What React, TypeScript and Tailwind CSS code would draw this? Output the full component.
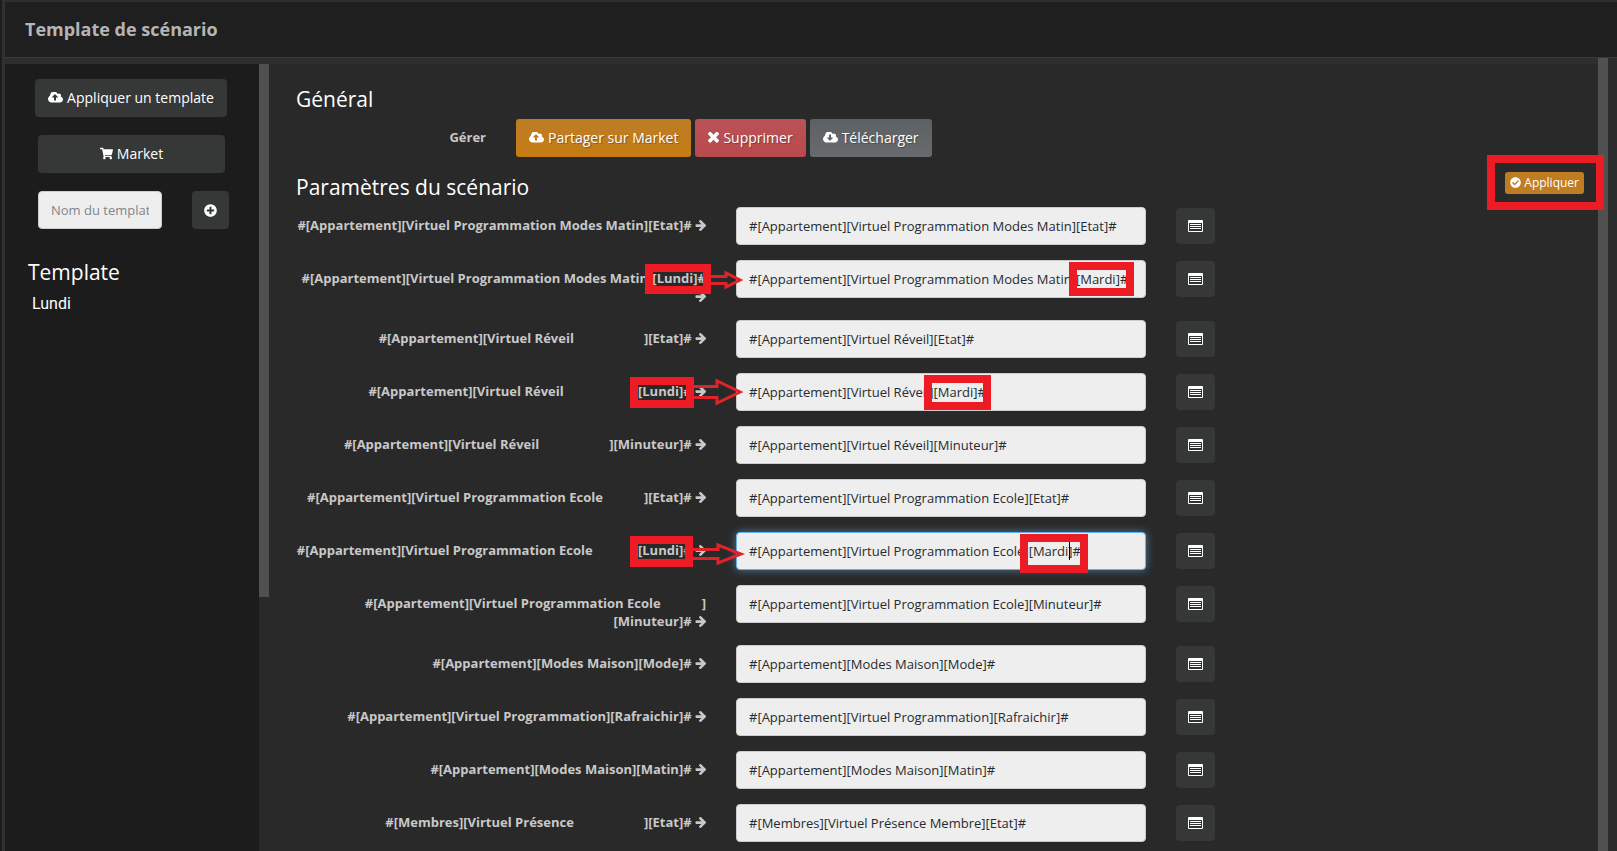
import type { ReactNode } from "react";
import { FaCheckCircle, FaPlusCircle, FaShoppingCart } from "react-icons/fa";

// one line of the scenario parameters form
interface Parametre {
  label: ReactNode;
  valeur: string;
  focus?: boolean;
  // red annotations laid over the row
  cadreLabel?: string;
  cadreValeur?: string;
  fleche?: ReactNode;
}

function FlecheDroite() {
  return (
    <svg
      viewBox="64 192 1536 1536"
      fill="currentColor"
      className="inline-block size-[11px] align-[-1px]"
    >
      <path d="M1600 960q0 54-37 91l-651 651q-39 37-91 37-51 0-90-37l-75-75q-38-38-38-91t38-91l293-293h-704q-52 0-84.5-37.5t-32.5-90.5v-128q0-53 32.5-90.5t84.5-37.5h704l-293-294q-38-36-38-90t38-90l75-75q38-38 90-38 53 0 91 38l651 651q37 35 37 90z" />
    </svg>
  );
}

function IconeNuage({ sens }: { sens: "haut" | "bas" }) {
  const fleche =
    sens === "haut"
      ? "M1216 864q0-14-9-23l-352-352q-9-9-23-9t-23 9l-351 351q-10 12-10 24 0 14 9 23t23 9h224v352q0 13 9.5 22.5t22.5 9.5h192q13 0 22.5-9.5t9.5-22.5v-352h224q13 0 22.5-9.5t9.5-22.5z"
      : "M1216 928q0-14-9-23t-23-9h-224v-352q0-13-9.5-22.5t-22.5-9.5h-192q-13 0-22.5 9.5t-9.5 22.5v352h-224q-13 0-22.5 9.5t-9.5 22.5q0 14 9 23l352 352q9 9 23 9t23-9l351-351q10-12 10-24z";
  return (
    <svg viewBox="-64 256 1920 1280" fill="currentColor" className="h-[11px] w-[15px] shrink-0">
      <path
        fillRule="evenodd"
        d={`${fleche}M1856 1152q0 159-112.5 271.5t-271.5 112.5h-1088q-185 0-316.5-131.5t-131.5-316.5q0-130 70-240t188-165q-2-30-2-43 0-212 150-362t362-150q156 0 285.5 87t188.5 231q71-62 166-62 106 0 181 75t75 181q0 76-41 138 130 31 213.5 135.5t83.5 238.5z`}
      />
    </svg>
  );
}

function IconeCroix() {
  return (
    <svg viewBox="302 434 1188 1120" fill="currentColor" className="size-[11px] shrink-0">
      <path d="M1490 1322q0 40-28 68l-136 136q-28 28-68 28t-68-28l-294-294-294 294q-28 28-68 28t-68-28l-136-136q-28-28-28-68t28-68l294-294-294-294q-28-28-28-68t28-68l136-136q28-28 68-28t68 28l294 294 294-294q28-28 68-28t68 28l136 136q28 28 28 68t-28 68l-294 294 294 294q28 28 28 68z" />
    </svg>
  );
}

function IconeListe() {
  return (
    <svg viewBox="0 0 15 12" className="h-3 w-[15px]">
      <rect width="15" height="12" rx="1" fill="#fff" />
      <path d="M1 3h13v8h-13z" fill="#303232" />
      <path
        d="M2 4.5h11M2 6.5h11M2 8.5h11"
        stroke="#fff"
        strokeWidth="1.2"
      />
    </svg>
  );
}

// blank left where a name has been removed
function Blanc({ court = false }: { court?: boolean }) {
  return <span className={court ? "inline-block w-[41px]" : "inline-block w-[70px]"} />;
}

// hollow red arrow going from the label to the input
function FlecheRouge({ d, className }: { d: string; className: string }) {
  return (
    <svg
      viewBox="0 0 52 28"
      className={`pointer-events-none absolute z-10 h-7 w-[52px] ${className}`}
    >
      <path d={d} fill="none" stroke="#e0222b" strokeWidth="3" />
    </svg>
  );
}

const parametres: Parametre[] = [
  {
    label: "#[Appartement][Virtuel Programmation Modes Matin][Etat]#",
    valeur: "#[Appartement][Virtuel Programmation Modes Matin][Etat]#",
  },
  {
    label: "#[Appartement][Virtuel Programmation Modes Matin][Lundi]#",
    valeur: "#[Appartement][Virtuel Programmation Modes Matin][Mardi]#",
    cadreLabel: "right-[10px] top-1 h-[30px] w-[66px]",
    cadreValeur: "left-[348px] top-[2px] h-[34px] w-[65px]",
    fleche: (
      <FlecheRouge className="top-[6px] -right-[24px]" d="M17 10.5H33V7L47 14L33 21V17.5H17" />
    ),
  },
  {
    label: <>#[Appartement][Virtuel Réveil<Blanc />][Etat]#</>,
    valeur: "#[Appartement][Virtuel Réveil][Etat]#",
  },
  {
    label: <>#[Appartement][Virtuel Réveil<Blanc />][Lundi]#</>,
    valeur: "#[Appartement][Virtuel Réveil][Mardi]#",
    cadreLabel: "right-[27px] top-1 h-[31px] w-[64px]",
    cadreValeur: "left-[203px] top-[2px] h-[35px] w-[67px]",
    fleche: <FlecheRouge className="top-[5px] -right-[24px]" d="M0 8.5H24V3L47 14L24 25V19.5H0" />,
  },
  {
    label: <>#[Appartement][Virtuel Réveil<Blanc />][Minuteur]#</>,
    valeur: "#[Appartement][Virtuel Réveil][Minuteur]#",
  },
  {
    label: <>#[Appartement][Virtuel Programmation Ecole<Blanc court />][Etat]#</>,
    valeur: "#[Appartement][Virtuel Programmation Ecole][Etat]#",
  },
  {
    label: <>#[Appartement][Virtuel Programmation Ecole<Blanc court />][Lundi]#</>,
    valeur: "#[Appartement][Virtuel Programmation Ecole][Mardi]#",
    focus: true,
    cadreLabel: "right-[28px] top-1 h-[31px] w-[63px]",
    cadreValeur: "left-[299px] top-[2px] h-[39px] w-[68px]",
    fleche: <FlecheRouge className="top-[8px] -right-[24px]" d="M0 9.5H25V5L48 14L25 23V18.5H0" />,
  },
  {
    label: (
      <>
        #[Appartement][Virtuel Programmation Ecole
        <Blanc court />]
        <br />
        [Minuteur]#
      </>
    ),
    valeur: "#[Appartement][Virtuel Programmation Ecole][Minuteur]#",
  },
  {
    label: "#[Appartement][Modes Maison][Mode]#",
    valeur: "#[Appartement][Modes Maison][Mode]#",
  },
  {
    label: "#[Appartement][Virtuel Programmation][Rafraichir]#",
    valeur: "#[Appartement][Virtuel Programmation][Rafraichir]#",
  },
  {
    label: "#[Appartement][Modes Maison][Matin]#",
    valeur: "#[Appartement][Modes Maison][Matin]#",
  },
  {
    label: <>#[Membres][Virtuel Présence<Blanc />][Etat]#</>,
    valeur: "#[Membres][Virtuel Présence Membre][Etat]#",
  },
];

function LigneParametre({ parametre, index }: { parametre: Parametre; index: number }) {
  const id = `parametre-${index}`;
  return (
    <div className="mb-[15px] grid grid-cols-3">
      <div className="relative px-[15px] pt-[9px] text-right">
        <label htmlFor={id} className="block text-[13px] leading-[18px] font-bold text-[#c8c8c8]">
          {parametre.label} <FlecheDroite />
        </label>
        {parametre.cadreLabel && (
          <div
            className={`pointer-events-none absolute border-8 border-[#ed1c24] ${parametre.cadreLabel}`}
          />
        )}
        {parametre.fleche}
      </div>
      <div className="relative px-[15px]">
        <input
          id={id}
          type="text"
          defaultValue={parametre.valeur}
          className={`block h-[38px] w-full rounded-[4px] border bg-[#eee] px-3 text-[13px] text-[#272b30] outline-none ${
            parametre.focus
              ? "border-[#66afe9] shadow-[0_0_8px_rgba(102,175,233,0.6)]"
              : "border-[#ccc]"
          }`}
        />
        {parametre.focus && (
          <span className="absolute top-[10px] left-[348px] h-[18px] w-px bg-black" />
        )}
        {parametre.cadreValeur && (
          <div
            className={`pointer-events-none absolute border-8 border-[#ed1c24] ${parametre.cadreValeur}`}
          />
        )}
      </div>
      <div className="px-[15px] pt-px">
        <button
          type="button"
          aria-label="Choisir une commande"
          className="flex h-9 w-[39px] items-center justify-center rounded-[4px] bg-[#363838]"
        >
          <IconeListe />
        </button>
      </div>
    </div>
  );
}

function Sidebar() {
  return (
    <aside className="w-[254px] shrink-0 bg-[#1c1c1c] pt-[15px]">
      <div className="pr-[32px] pl-[30px]">
        <button
          type="button"
          className="flex h-[38px] w-full items-center justify-center gap-1 rounded-[4px] bg-[#363838] pb-[2px] text-[14px] whitespace-nowrap text-white"
        >
          <IconeNuage sens="haut" />
          Appliquer un template
        </button>
      </div>
      <div className="mt-[18px] pr-[34px] pl-[33px]">
        <button
          type="button"
          className="flex h-[38px] w-full items-center justify-center gap-1 rounded-[4px] bg-[#363838] pb-[2px] text-[14px] text-white"
        >
          <FaShoppingCart className="size-[13px]" />
          Market
        </button>
      </div>
      <div className="mt-[18px] flex justify-between pr-[30px] pl-[33px]">
        <input
          type="text"
          aria-label="Nom du template"
          placeholder="Nom du template"
          className="h-[38px] w-[124px] rounded-[4px] border border-[#ccc] bg-[#eee] px-3 text-[13px] outline-none placeholder:text-[#7f8589]"
        />
        <button
          type="button"
          aria-label="Ajouter"
          className="flex h-[38px] w-[37px] items-center justify-center rounded-[4px] bg-[#363838] text-white"
        >
          <FaPlusCircle className="size-[13px]" />
        </button>
      </div>
      <h2 className="mt-[28px] pl-[23px] text-[21px] leading-[30px] text-white">Template</h2>
      <a
        href="#"
        className="mt-[5px] block pl-[27px] font-['Roboto','Liberation_Sans',sans-serif] text-[16px] leading-[24px] text-white"
      >
        Lundi
      </a>
    </aside>
  );
}

export default function App() {
  return (
    <div className="flex h-screen overflow-hidden bg-[#1c1c1c] font-['Open_Sans','Noto_Sans',sans-serif]">
      <div className="w-[5px] shrink-0 border-r-3 border-[#303030] bg-[#1b1d1d]" />
      <div className="flex min-w-0 flex-1 flex-col border-t-2 border-[#2e2e2e]">
        <header className="flex h-[56px] shrink-0 items-center border-b border-[#3a3a3a] bg-[#1f1f1f] pb-[2px] pl-5">
          <h1 className="text-[18px] leading-6 font-bold text-[#b5b5b5]">Template de scénario</h1>
        </header>
        <div className="flex min-h-0 flex-1 bg-[#2e2e2e] pt-[6px]">
          <Sidebar />
          <main className="relative min-w-0 flex-1 bg-[#29292a] pr-4 pl-[22px]">
            {/* scrollbars of the two panels */}
            <div className="absolute top-0 left-0 h-[533px] w-[10px] bg-[#505050]" />
            <div className="absolute -top-[6px] right-0 bottom-0 w-[19px] border-l-10 border-[#505050] bg-[#2c2c2c]" />

            <div className="relative">
              <h2 className="px-[15px] pt-[20px] text-[21px] leading-[30px] text-white">Général</h2>
              <div className="mt-[5px] grid grid-cols-6">
                <span className="px-[15px] pt-[9px] text-right text-[13px] leading-[18px] font-bold text-[#c8c8c8]">
                  Gérer
                </span>
                <div className="col-span-5 flex gap-1 px-[15px] text-[14px] text-white">
                  <button
                    type="button"
                    className="flex h-[38px] items-center gap-1 rounded-[3px] bg-linear-to-b from-[#bd7c25] to-[#c57c12] px-[13px] pb-[2px] text-shadow-[1px_1px_1px_rgba(0,0,0,0.3)]"
                  >
                    <IconeNuage sens="haut" />
                    Partager sur Market
                  </button>
                  <button
                    type="button"
                    className="flex h-[38px] items-center gap-1 rounded-[3px] bg-linear-to-b from-[#b95256] to-[#b94a4d] px-[13px] pb-[2px] text-shadow-[1px_1px_1px_rgba(0,0,0,0.3)]"
                  >
                    <IconeCroix />
                    Supprimer
                  </button>
                  <button
                    type="button"
                    className="flex h-[38px] items-center gap-1 rounded-[3px] bg-linear-to-b from-[#5d6163] to-[#686b6d] px-[13px] pb-[2px] text-shadow-[1px_1px_1px_rgba(0,0,0,0.3)]"
                  >
                    <IconeNuage sens="bas" />
                    Télécharger
                  </button>
                </div>
              </div>

              <div className="relative mt-[14px] flex h-9 items-start justify-between pr-[17px] pl-[15px]">
                <h2 className="text-[21px] leading-[32px] text-white">Paramètres du scénario</h2>
                <button
                  type="button"
                  className="mt-px flex h-[22px] items-center gap-[3px] rounded-[3px] bg-[#bf7c20] px-[5px] pb-px text-[12px] text-white"
                >
                  <FaCheckCircle className="size-[11px]" />
                  Appliquer
                </button>
                <div className="pointer-events-none absolute -top-4 -right-[3px] h-[55px] w-[117px] border-8 border-[#ed1c24]" />
              </div>

              <form>
                {parametres.map((parametre, index) => (
                  <LigneParametre key={index} parametre={parametre} index={index} />
                ))}
              </form>
            </div>
          </main>
        </div>
      </div>
    </div>
  );
}
